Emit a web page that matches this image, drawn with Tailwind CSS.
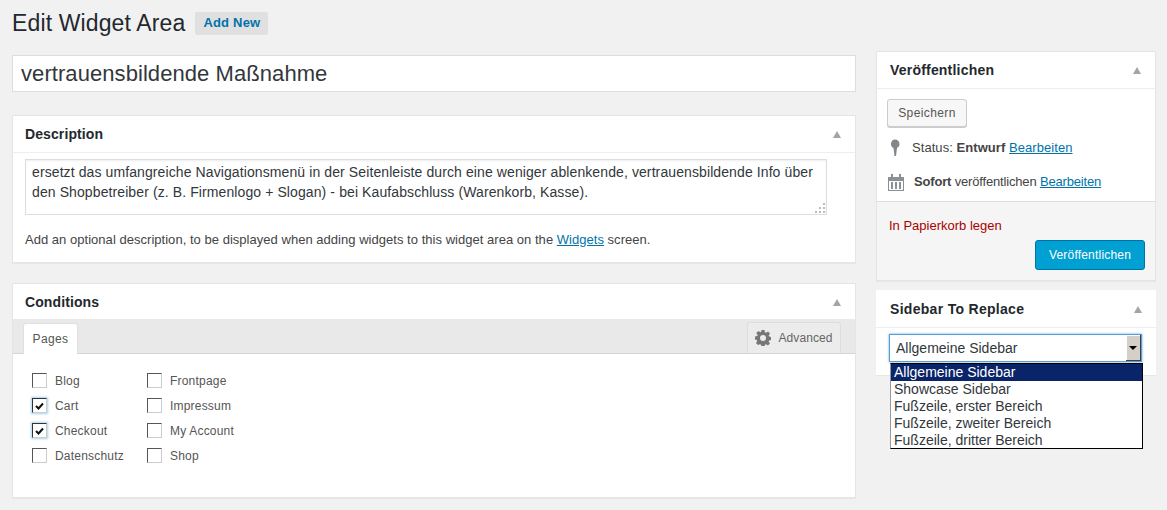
<!DOCTYPE html>
<html lang="de">
<head>
    <meta charset="UTF-8">
    <script src="https://cdn.jsdelivr.net/npm/@tailwindcss/browser@4"></script>
    <title>Edit Widget Area</title>
</head>
<body class="bg-[#f1f1f1] h-[510px] overflow-hidden font-['Liberation_Sans',Arial,sans-serif] text-[13px] text-[#444]">
    <div class="flex pl-[12px] pr-[11px]">
        <!-- main column -->
        <div class="w-[844px] shrink-0">
            <div class="flex items-center h-[47px] pb-[1px]">
                <h1 class="text-[23px] leading-[29px] tracking-[0.13px] text-[#23282d]">Edit Widget Area</h1>
                <a class="ml-[10px] bg-[#e0e0e0] text-[#0073aa] font-bold text-[13px] tracking-[0.2px] rounded-[2px] h-[23px] w-[73px] flex items-center justify-center">Add New</a>
            </div>
            <div class="mt-[8px] h-[37px] border border-[#ddd] bg-white pl-[8px] text-[22px] leading-[35px] tracking-[0.07px] text-[#32373c]">vertrauensbildende Maßnahme</div>

            <!-- description -->
            <section class="mt-[23px] h-[148px] border border-[#e5e5e5] bg-white shadow-[0_1px_1px_rgba(0,0,0,0.04)]">
                <div class="flex items-center justify-between h-[37px] border-b border-[#eee] pl-[12px] pr-[14px]">
                    <h2 class="font-bold text-[14px] tracking-[0.1px] text-[#23282d]">Description</h2>
                    <span class="w-0 h-0 border-x-[4px] border-x-transparent border-b-[7px] border-b-[#a0a5aa]"></span>
                </div>
                <div class="relative mt-[6px] ml-[12px] w-[802px] h-[56px] border border-[#ddd] px-[6px] pt-[2px] text-[14px] leading-[20px] tracking-[0.1px] text-[#32373c] shadow-[inset_0_1px_2px_rgba(0,0,0,0.07)]">
                    ersetzt das umfangreiche Navigationsmenü in der Seitenleiste durch eine weniger ablenkende, vertrauensbildende Info über den Shopbetreiber (z. B. Firmenlogo + Slogan) - bei Kaufabschluss (Warenkorb, Kasse).
                    <svg class="absolute right-0 bottom-0" width="12" height="12" viewBox="0 0 12 12" fill="#bbb"><rect x="9" y="1" width="2" height="2"/><rect x="5" y="5" width="2" height="2"/><rect x="9" y="5" width="2" height="2"/><rect x="1" y="9" width="2" height="2"/><rect x="5" y="9" width="2" height="2"/><rect x="9" y="9" width="2" height="2"/></svg>
                </div>
                <p class="mt-[16px] ml-[12px] text-[13px] leading-[18px] tracking-[0.03px]">Add an optional description, to be displayed when adding widgets to this widget area on the <a class="text-[#0073aa] underline">Widgets</a> screen.</p>
            </section>

            <!-- conditions -->
            <section class="mt-[20px] h-[215px] border border-[#e5e5e5] bg-white shadow-[0_1px_1px_rgba(0,0,0,0.04)]">
                <div class="flex items-center justify-between h-[35px] pt-[2px] pl-[12px] pr-[14px]">
                    <h2 class="font-bold text-[14px] tracking-[0.1px] text-[#23282d]">Conditions</h2>
                    <span class="w-0 h-0 border-x-[4px] border-x-transparent border-b-[7px] border-b-[#a0a5aa]"></span>
                </div>
                <div class="flex justify-between items-end h-[35px] bg-[#e9e9e9] border-b border-[#d5d5d5] pl-[10px] pr-[14px]">
                    <div class="-mb-px h-[31px] w-[55px] bg-white border border-b-0 border-[#e0e0e0] rounded-t-[3px] flex items-center justify-center text-[12px] tracking-[0.4px] text-[#555]">Pages</div>
                    <div class="h-[31px] w-[94px] bg-[#ececec] border border-b-0 border-[#ddd] rounded-t-[3px] flex items-center justify-center gap-[7px] text-[12px] tracking-[0.1px] text-[#666]">
                        <svg width="16" height="16" viewBox="0 0 16 16"><path fill="#777" fill-rule="evenodd" d="M6.5 0h3l.4 2.2 1.300.6L13 1.500 15 3.600l-1.300 1.800.5 1.200 2.200.4v3l-2.200.4-.5 1.300 1.300 1.800-2.100 2-1.800-1.200-1.200.5-.4 2.200h-3l-.4-2.200-1.300-.5L3 15 1 13l1.300-1.900-.5-1.200L0 9.500v-3l2.200-.4.5-1.200L1.300 3 3.400 1l1.800 1.300 1-.5zM8 5a3 3 0 1 0 0 6 3 3 0 0 0 0-6z"/></svg>
                        Advanced
                    </div>
                </div>
                <div class="flex pt-[14px] pl-[19px] text-[12px] text-[#555] tracking-[0.2px]">
                    <div class="w-[115px] flex flex-col">
                        <div class="flex items-center h-[25px]"><span class="w-[15px] h-[15px] border border-[#555] border-r-[#ccc] border-b-[#ccc] mr-[8px]"></span><span class="mt-[1px]">Blog</span></div>
                        <div class="flex items-center h-[25px]"><span class="w-[15px] h-[15px] border border-[#333] border-r-[#ccc] border-b-[#ccc] mr-[8px] flex items-center justify-center shadow-[0_0_2px_1px_#a9d3ee]"><svg width="9" height="8" viewBox="0 0 9 8"><path d="M1 4l2.500 2.500L8 1.500" fill="none" stroke="#111" stroke-width="2"/></svg></span>Cart</div>
                        <div class="flex items-center h-[25px]"><span class="w-[15px] h-[15px] border border-[#333] border-r-[#ccc] border-b-[#ccc] mr-[8px] flex items-center justify-center shadow-[0_0_2px_1px_#a9d3ee]"><svg width="9" height="8" viewBox="0 0 9 8"><path d="M1 4l2.500 2.500L8 1.500" fill="none" stroke="#111" stroke-width="2"/></svg></span>Checkout</div>
                        <div class="flex items-center h-[25px]"><span class="w-[15px] h-[15px] border border-[#555] border-r-[#ccc] border-b-[#ccc] mr-[8px]"></span>Datenschutz</div>
                    </div>
                    <div class="flex flex-col">
                        <div class="flex items-center h-[25px]"><span class="w-[15px] h-[15px] border border-[#555] border-r-[#ccc] border-b-[#ccc] mr-[8px]"></span>Frontpage</div>
                        <div class="flex items-center h-[25px]"><span class="w-[15px] h-[15px] border border-[#555] border-r-[#ccc] border-b-[#ccc] mr-[8px]"></span>Impressum</div>
                        <div class="flex items-center h-[25px]"><span class="w-[15px] h-[15px] border border-[#555] border-r-[#ccc] border-b-[#ccc] mr-[8px]"></span>My Account</div>
                        <div class="flex items-center h-[25px]"><span class="w-[15px] h-[15px] border border-[#555] border-r-[#ccc] border-b-[#ccc] mr-[8px]"></span>Shop</div>
                    </div>
                </div>
            </section>
        </div>

        <!-- side column -->
        <div class="ml-[20px] w-[280px] shrink-0 pt-[51px]">
            <section class="h-[230px] border border-[#e5e5e5] bg-white shadow-[0_1px_1px_rgba(0,0,0,0.04)] flex flex-col">
                <div class="flex items-center justify-between h-[37px] border-b border-[#eee] pl-[13px] pr-[14px] shrink-0">
                    <h2 class="font-bold text-[14px] tracking-[0.2px] text-[#23282d]">Veröffentlichen</h2>
                    <span class="w-0 h-0 border-x-[4px] border-x-transparent border-b-[7px] border-b-[#a0a5aa]"></span>
                </div>
                <div class="flex-1 pl-[10px] pt-[10px]">
                    <div class="w-[80px] h-[28px] border border-[#ccc] rounded-[3px] bg-[#f7f7f7] flex items-center justify-center text-[#555] shadow-[0_1px_0_#ccc] text-[12px] tracking-[0.4px]">Speichern</div>
                    <div class="flex items-center mt-[9px] h-[24px] text-[13px] tracking-[0.06px]">
                        <svg class="ml-[2px] mr-[11px]" width="12" height="18" viewBox="0 0 12 18"><path fill="#82878c" d="M6 0.500a4.500 4.500 0 0 1 2 8.500L7 17H5.500L4.500 9A4.500 4.500 0 0 1 6 0.500z"/></svg>
                        <span>Status: <b>Entwurf</b> <a class="text-[#0073aa] underline">Bearbeiten</a></span>
                    </div>
                    <div class="flex items-center mt-[10px] h-[24px] text-[13px]">
                        <svg class="ml-[1px] mr-[10px]" width="17" height="17" viewBox="0 0 17 17"><path fill="#8c9094" fill-rule="evenodd" d="M0 3h3V0h2v3h6V0h2v3h3v14H0zM1 7v9h14V7zM3 8h2v7H3zm4 0h2v7H7zm4 0h2v7h-2z"/></svg>
                        <span class="-ml-[1px] tracking-[-0.17px]"><b>Sofort</b> veröffentlichen <a class="text-[#0073aa] underline">Bearbeiten</a></span>
                    </div>
                </div>
                <div class="h-[79px] bg-[#f5f5f5] border-t border-[#ddd] px-[12px] shrink-0">
                    <a class="block mt-[15px] text-[13px] leading-[18px] text-[#a00]">In Papierkorb legen</a>
                    <div class="flex justify-end mr-[-2px] mt-[5px]"><div class="w-[110px] h-[30px] bg-[#00a0d2] border border-[#0073aa] rounded-[3px] flex items-center justify-center text-white text-[12px] tracking-[0.2px]">Veröffentlichen</div></div>
                </div>
            </section>

            <section class="relative mt-[9px] h-[85px] bg-white shadow-[0_1px_1px_rgba(0,0,0,0.04)]">
                <div class="flex items-center justify-between h-[38px] pt-[2px] border-b border-[#eee] pl-[14px] pr-[14px]">
                    <h2 class="font-bold text-[14px] tracking-[0.3px] text-[#23282d]">Sidebar To Replace</h2>
                    <span class="w-0 h-0 border-x-[4px] border-x-transparent border-b-[7px] border-b-[#a0a5aa]"></span>
                </div>
                <div class="absolute left-[13px] top-[44px] w-[253px] h-[28px] border border-[#5b9dd9] shadow-[0_0_2px_rgba(30,140,190,0.8)] flex items-center justify-between pl-[6px] text-[14px] text-[#32373c]">
                    <span>Allgemeine Sidebar</span>
                    <span class="w-[15px] h-[26px] bg-[#d4d0c8] border-r border-b border-[#404040] shadow-[inset_1px_1px_0_#fff] flex items-center justify-center"><span class="w-0 h-0 border-x-[4px] border-x-transparent border-t-[4px] border-t-black"></span></span>
                </div>
                <!-- open select list -->
                <div class="absolute left-[14px] top-[73px] w-[253px] h-[86px] z-10 bg-white border border-black border-l-[#999] text-[14px] leading-[17px] text-[#32373c]">
                    <div class="bg-[#0a246a] text-white pl-[3px]">Allgemeine Sidebar</div>
                    <div class="pl-[3px]">Showcase Sidebar</div>
                    <div class="pl-[3px]">Fußzeile, erster Bereich</div>
                    <div class="pl-[3px]">Fußzeile, zweiter Bereich</div>
                    <div class="pl-[3px]">Fußzeile, dritter Bereich</div>
                </div>
            </section>
        </div>
    </div>
</body>
</html>
